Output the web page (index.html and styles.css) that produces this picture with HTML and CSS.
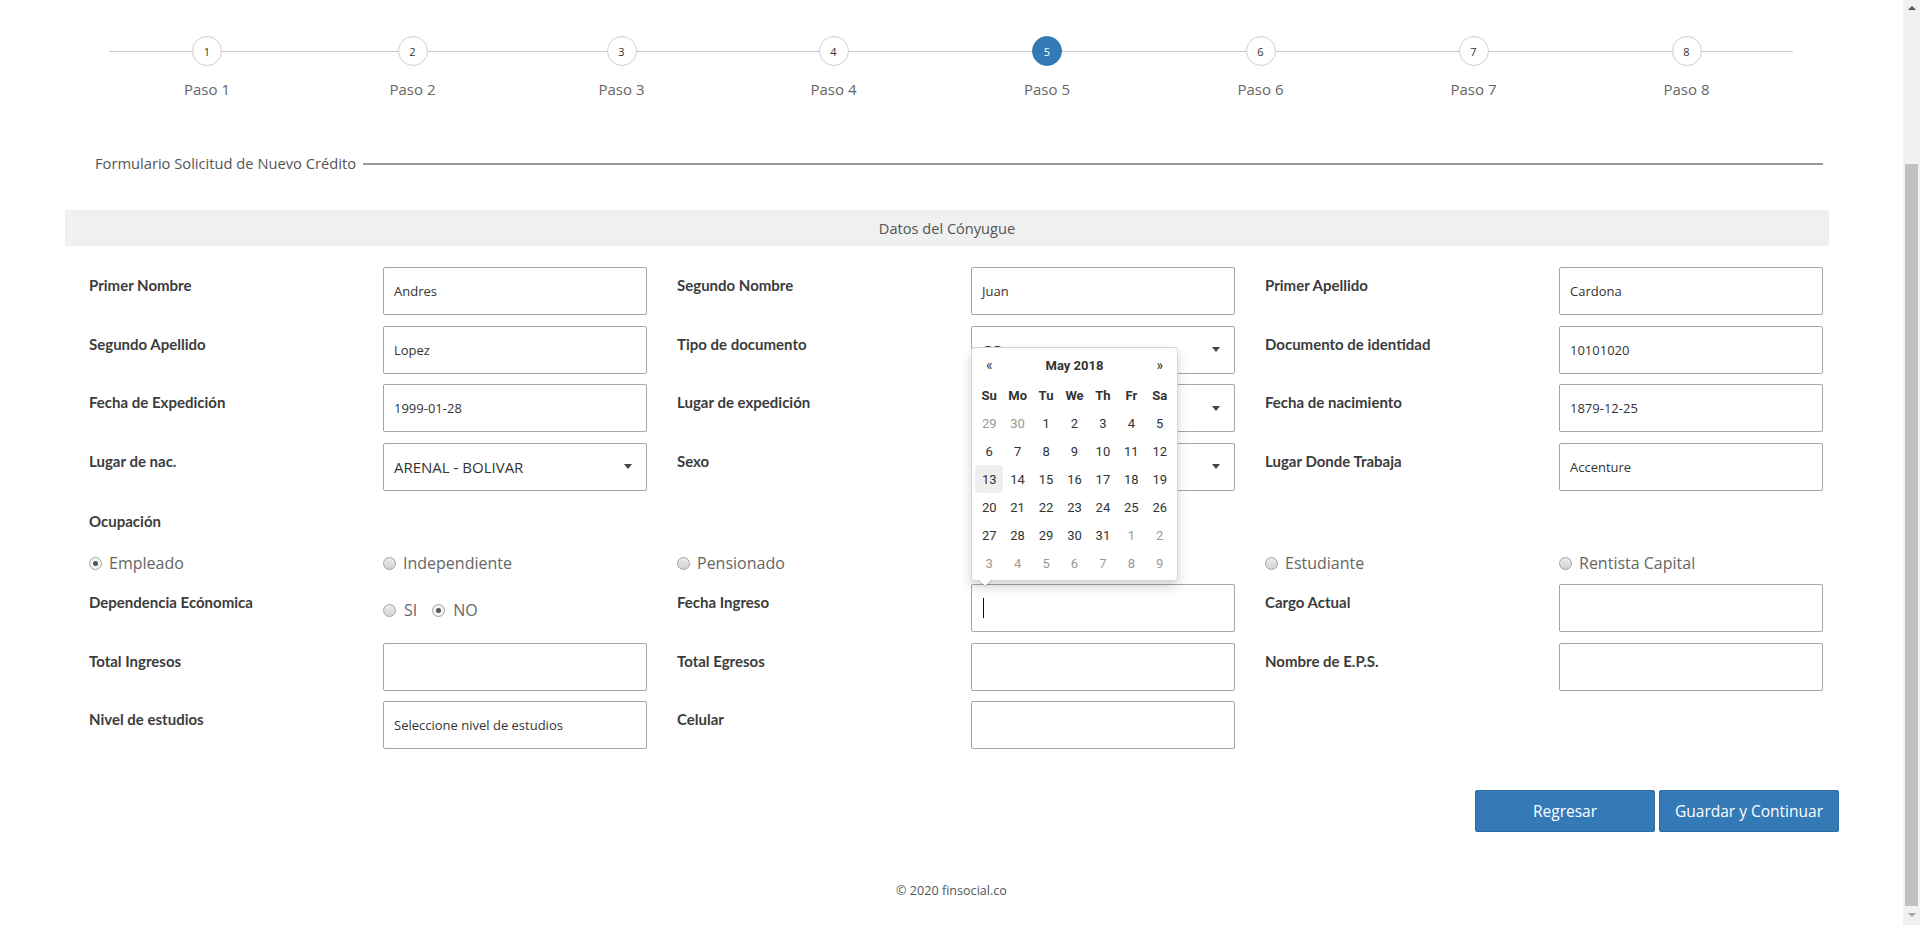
FILE: index.html
```html
<!DOCTYPE html>
<html lang="es">
<head>
<meta charset="utf-8">
<title>Formulario Solicitud de Nuevo Crédito</title>
<link rel="stylesheet" href="styles.css">
</head>
<body>
<main class="page">
  <ol class="stepper">
    <li class="step"><span class="dot">1</span><span class="step-label">Paso 1</span></li>
    <li class="step"><span class="dot">2</span><span class="step-label">Paso 2</span></li>
    <li class="step"><span class="dot">3</span><span class="step-label">Paso 3</span></li>
    <li class="step"><span class="dot">4</span><span class="step-label">Paso 4</span></li>
    <li class="step active"><span class="dot">5</span><span class="step-label">Paso 5</span></li>
    <li class="step"><span class="dot">6</span><span class="step-label">Paso 6</span></li>
    <li class="step"><span class="dot">7</span><span class="step-label">Paso 7</span></li>
    <li class="step"><span class="dot">8</span><span class="step-label">Paso 8</span></li>
  </ol>

  <div class="form-title"><span class="form-title-text">Formulario Solicitud de Nuevo Crédito</span><span class="rule"></span></div>

  <section class="form">
    <h2 class="banner">Datos del Cónyugue</h2>

    <div class="row">
      <div class="cell lbl">Primer Nombre</div>
      <div class="cell"><div class="input">Andres</div></div>
      <div class="cell lbl">Segundo Nombre</div>
      <div class="cell"><div class="input">Juan</div></div>
      <div class="cell lbl">Primer Apellido</div>
      <div class="cell"><div class="input">Cardona</div></div>
    </div>

    <div class="row">
      <div class="cell lbl">Segundo Apellido</div>
      <div class="cell"><div class="input">Lopez</div></div>
      <div class="cell lbl">Tipo de documento</div>
      <div class="cell"><div class="input select"><span class="sel-text">CC</span><span class="caret"></span></div></div>
      <div class="cell lbl">Documento de identidad</div>
      <div class="cell"><div class="input">10101020</div></div>
    </div>

    <div class="row">
      <div class="cell lbl">Fecha de Expedición</div>
      <div class="cell"><div class="input">1999-01-28</div></div>
      <div class="cell lbl">Lugar de expedición</div>
      <div class="cell"><div class="input select"><span class="sel-text">BOGOTA - BOGOTA</span><span class="caret"></span></div></div>
      <div class="cell lbl">Fecha de nacimiento</div>
      <div class="cell"><div class="input">1879-12-25</div></div>
    </div>

    <div class="row">
      <div class="cell lbl">Lugar de nac.</div>
      <div class="cell"><div class="input select"><span class="sel-text">ARENAL - BOLIVAR</span><span class="caret"></span></div></div>
      <div class="cell lbl">Sexo</div>
      <div class="cell"><div class="input select"><span class="sel-text">Masculino</span><span class="caret"></span></div></div>
      <div class="cell lbl">Lugar Donde Trabaja</div>
      <div class="cell"><div class="input">Accenture</div></div>
    </div>

    <div class="row row-ocup">
      <div class="cell lbl ocup">Ocupación</div>
    </div>

    <div class="row row-radios">
      <label class="cell opt"><span class="radio checked"></span>Empleado</label>
      <label class="cell opt"><span class="radio"></span>Independiente</label>
      <label class="cell opt"><span class="radio"></span>Pensionado</label>
      <label class="cell opt"><span class="radio"></span>Hogar</label>
      <label class="cell opt"><span class="radio"></span>Estudiante</label>
      <label class="cell opt"><span class="radio"></span>Rentista Capital</label>
    </div>

    <div class="row">
      <div class="cell lbl">Dependencia Ecónomica</div>
      <div class="cell yesno">
        <label class="opt"><span class="radio"></span>SI</label>
        <label class="opt"><span class="radio checked"></span>NO</label>
      </div>
      <div class="cell lbl">Fecha Ingreso</div>
      <div class="cell picker-cell">
        <div class="input focused"><span class="text-caret"></span></div>
        <div class="datepicker">
          <table class="cal">
            <thead>
              <tr class="cal-head"><th class="nav">«</th><th colspan="5" class="month">May 2018</th><th class="nav">»</th></tr>
              <tr class="dow"><th>Su</th><th>Mo</th><th>Tu</th><th>We</th><th>Th</th><th>Fr</th><th>Sa</th></tr>
            </thead>
            <tbody>
              <tr><td class="old">29</td><td class="old">30</td><td>1</td><td>2</td><td>3</td><td>4</td><td>5</td></tr>
              <tr><td>6</td><td>7</td><td>8</td><td>9</td><td>10</td><td>11</td><td>12</td></tr>
              <tr><td class="today">13</td><td>14</td><td>15</td><td>16</td><td>17</td><td>18</td><td>19</td></tr>
              <tr><td>20</td><td>21</td><td>22</td><td>23</td><td>24</td><td>25</td><td>26</td></tr>
              <tr><td>27</td><td>28</td><td>29</td><td>30</td><td>31</td><td class="old">1</td><td class="old">2</td></tr>
              <tr><td class="old">3</td><td class="old">4</td><td class="old">5</td><td class="old">6</td><td class="old">7</td><td class="old">8</td><td class="old">9</td></tr>
            </tbody>
          </table>
        </div>
      </div>
      <div class="cell lbl">Cargo Actual</div>
      <div class="cell"><div class="input"></div></div>
    </div>

    <div class="row">
      <div class="cell lbl">Total Ingresos</div>
      <div class="cell"><div class="input"></div></div>
      <div class="cell lbl">Total Egresos</div>
      <div class="cell"><div class="input"></div></div>
      <div class="cell lbl">Nombre de E.P.S.</div>
      <div class="cell"><div class="input"></div></div>
    </div>

    <div class="row">
      <div class="cell lbl">Nivel de estudios</div>
      <div class="cell"><div class="input">Seleccione nivel de estudios</div></div>
      <div class="cell lbl">Celular</div>
      <div class="cell"><div class="input"></div></div>
    </div>

    <div class="actions">
      <button class="btn" type="button">Regresar</button>
      <button class="btn" type="button">Guardar y Continuar</button>
    </div>
  </section>

  <footer class="footer">© 2020 finsocial.co</footer>
</main>

<div class="scrollbar" aria-hidden="true">
  <span class="sb-arrow sb-up"></span>
  <span class="sb-thumb"></span>
  <span class="sb-arrow sb-down"></span>
</div>
</body>
</html>
```

FILE: styles.css
```css
body {
  margin: 0;
  background: #ffffff;
  font-family: "Open Sans", "Liberation Sans", sans-serif;
  color: #333333;
}

.page {
  width: 1903px;
}

/* Stepper */
.stepper {
  list-style: none;
  margin: 0 0 0 105px;
  padding: 36px 0 0 0;
  width: 1688px;
  display: grid;
  grid-template-columns: 204px 207px 211px 213px 214px 213px 213px 213px;
  background-image: linear-gradient(#c9c9c9, #c9c9c9);
  background-repeat: no-repeat;
  background-size: 1685px 1px;
  background-position: 4px 51px;
}

.step {
  display: flex;
  flex-direction: column;
  align-items: center;
}

.dot {
  width: 30px;
  height: 30px;
  box-sizing: border-box;
  border: 1px solid #cfcfcf;
  border-radius: 50%;
  background: #ffffff;
  display: flex;
  align-items: center;
  justify-content: center;
  font-size: 11px;
  color: #333333;
}

.step.active .dot {
  background: #337ab7;
  border-color: #337ab7;
  color: #ffffff;
}

.step-label {
  margin-top: 13px;
  font-size: 15px;
  line-height: 20px;
  color: #666666;
}

/* Title */
.form-title {
  display: flex;
  align-items: center;
  margin: 54px 0 0 95px;
  width: 1728px;
}

.form-title-text {
  font-size: 14.7px;
  line-height: 20px;
  color: #555555;
  white-space: nowrap;
}

.rule {
  flex: 1;
  height: 2px;
  margin-left: 7px;
  margin-top: 2px;
  background: #9a9a9a;
}

/* Form */
.form {
  margin-left: 65px;
  width: 1764px;
}

.banner {
  margin: 37px 0 21px 0;
  height: 36px;
  line-height: 36px;
  background: #eff0f0;
  text-align: center;
  font-size: 14.6px;
  font-weight: 400;
  color: #555555;
}

.row {
  display: grid;
  grid-template-columns: repeat(6, 294px);
  height: 48px;
  margin-bottom: 10.5px;
}

.cell {
  padding: 0 6px 0 24px;
  box-sizing: border-box;
}

.lbl {
  padding-top: 8px;
  font-family: "Lato", "Liberation Sans", sans-serif;
  font-weight: 700;
  font-size: 15px;
  line-height: 20px;
  color: #3c3c3c;
}

.row-ocup {
  height: 41px;
  margin-bottom: 0;
}

.lbl.ocup {
  padding-top: 10px;
  grid-column: 1 / span 2;
}

.row-radios {
  height: 42px;
  margin-bottom: 0;
  align-items: center;
}

.input {
  height: 48px;
  box-sizing: border-box;
  border: 1px solid #a6a6a6;
  border-radius: 2px;
  background: #ffffff;
  padding: 0 10px;
  display: flex;
  align-items: center;
  font-size: 13px;
  color: #333333;
  overflow: hidden;
  white-space: nowrap;
}

.select {
  font-size: 15px;
  padding-right: 14px;
}

.sel-text {
  flex: 1;
}

.caret {
  width: 0;
  height: 0;
  border-left: 4px solid transparent;
  border-right: 4px solid transparent;
  border-top: 5px solid #444444;
}

.text-caret {
  width: 1px;
  height: 20px;
  background: #111111;
  margin-left: 1px;
}

/* Radios */
.opt {
  display: flex;
  align-items: center;
  font-size: 16px;
  color: #666666;
  line-height: 20px;
}

.radio {
  width: 13px;
  height: 13px;
  box-sizing: border-box;
  border: 1px solid #a3a3a3;
  border-radius: 50%;
  background: linear-gradient(#ececec, #d2d2d2);
  margin-right: 7px;
  display: flex;
  align-items: center;
  justify-content: center;
  flex: none;
}

.radio.checked {
  background: #f3f3f3;
}

.radio.checked::after {
  content: "";
  width: 5px;
  height: 5px;
  border-radius: 50%;
  background: #555555;
}

.yesno {
  display: flex;
  align-items: flex-start;
  padding-top: 16px;
}

.yesno .opt + .opt {
  margin-left: 15px;
}

.yesno .radio {
  margin-right: 8px;
}

/* Datepicker */
.picker-cell {
  position: relative;
}

.datepicker {
  position: absolute;
  left: 24px;
  bottom: calc(100% + 3px);
  width: 207px;
  box-sizing: border-box;
  padding: 3px;
  background: #ffffff;
  border: 1px solid rgba(0, 0, 0, 0.16);
  border-radius: 4px;
  box-shadow: 0 6px 12px rgba(0, 0, 0, 0.175);
  z-index: 5;
  font-family: "Roboto", "Liberation Sans", sans-serif;
}

.datepicker::before {
  content: "";
  position: absolute;
  left: 6px;
  bottom: -7px;
  border-left: 7px solid transparent;
  border-right: 7px solid transparent;
  border-top: 7px solid rgba(0, 0, 0, 0.18);
}

.datepicker::after {
  content: "";
  position: absolute;
  left: 7px;
  bottom: -6px;
  border-left: 6px solid transparent;
  border-right: 6px solid transparent;
  border-top: 6px solid #ffffff;
}

.cal {
  width: 199px;
  border-collapse: collapse;
  table-layout: fixed;
}

.cal th,
.cal td {
  height: 28px;
  padding: 0;
  text-align: center;
  font-size: 13px;
  color: #333333;
  border-radius: 4px;
}

.cal th {
  font-weight: 700;
}

.cal .cal-head th {
  padding-bottom: 2px;
}

.cal .nav {
  font-size: 14px;
  font-weight: 400;
}

.cal td.old {
  color: #999999;
}

.cal td.today {
  background: #eeeeee;
}

/* Actions */
.actions {
  display: flex;
  justify-content: flex-end;
  gap: 4px;
  margin-top: 41px;
  margin-right: -10px;
}

.btn {
  width: 180px;
  height: 42px;
  border: 1px solid #2e6da4;
  border-radius: 2px;
  background: #337ab7;
  color: #ffffff;
  font-family: "Open Sans", "Liberation Sans", sans-serif;
  font-size: 15.5px;
  cursor: pointer;
}

.footer {
  margin-top: 49px;
  text-align: center;
  font-size: 12.6px;
  line-height: 20px;
  color: #555555;
}

/* Browser scrollbar drawn over the right edge */
.scrollbar {
  position: fixed;
  top: 0;
  right: 0;
  width: 17px;
  height: 100%;
  background: #f1f1f1;
  display: flex;
  flex-direction: column;
  align-items: center;
}

.sb-arrow {
  width: 0;
  height: 0;
  border-left: 4px solid transparent;
  border-right: 4px solid transparent;
}

.sb-up {
  margin-top: 6px;
  border-bottom: 4px solid #505050;
}

.sb-down {
  margin-top: 7px;
  border-top: 4px solid #a3a3a3;
}

.sb-thumb {
  width: 13px;
  height: 742px;
  margin-top: 154px;
  background: #c1c1c1;
}
```
